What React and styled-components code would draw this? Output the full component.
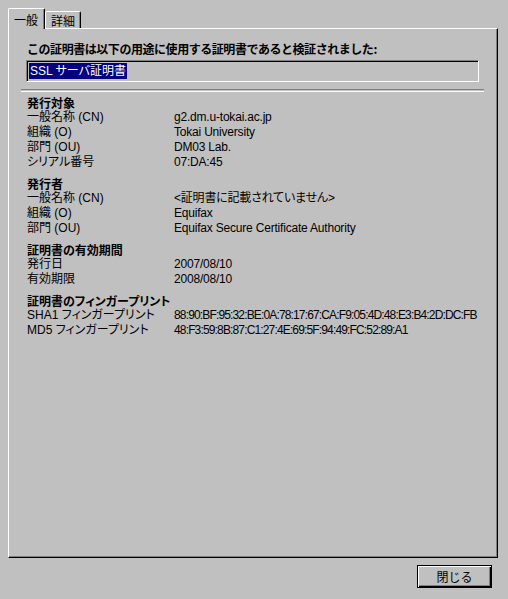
import React from "react";
import styled, { createGlobalStyle } from "styled-components";

const GlobalStyle = createGlobalStyle`
  html, body {
    margin: 0;
    padding: 0;
    background: #c0c0c0;
  }
  body {
    font-family: "Liberation Sans", "Noto Sans CJK JP", sans-serif;
    font-size: 12px;
    font-feature-settings: "palt";
    color: #000;
  }
`;

const sections = [
  {
    title: "発行対象",
    rows: [
      ["一般名称 (CN)", "g2.dm.u-tokai.ac.jp"],
      ["組織 (O)", "Tokai University"],
      ["部門 (OU)", "DM03 Lab."],
      ["シリアル番号", "07:DA:45"],
    ],
  },
  {
    title: "発行者",
    rows: [
      ["一般名称 (CN)", "<証明書に記載されていません>"],
      ["組織 (O)", "Equifax"],
      ["部門 (OU)", "Equifax Secure Certificate Authority"],
    ],
  },
  {
    title: "証明書の有効期間",
    rows: [
      ["発行日", "2007/08/10"],
      ["有効期限", "2008/08/10"],
    ],
  },
  {
    title: "証明書のフィンガープリント",
    rows: [
      ["SHA1 フィンガープリント", "88:90:BF:95:32:BE:0A:78:17:67:CA:F9:05:4D:48:E3:B4:2D:DC:FB"],
      ["MD5 フィンガープリント", "48:F3:59:8B:87:C1:27:4E:69:5F:94:49:FC:52:89:A1"],
    ],
    tight: true,
  },
];

export default function App() {
  return (
    <Window>
      <GlobalStyle />
      <TabStrip>
        <Tab active>一般</Tab>
        <Tab>詳細</Tab>
      </TabStrip>
      <Panel>
        <Heading wide>この証明書は以下の用途に使用する証明書であると検証されました:</Heading>
        <Field>
          <Selected>SSL サーバ証明書</Selected>
        </Field>
        <Separator />
        {sections.map((s) => (
          <Section key={s.title}>
            <Heading>{s.title}</Heading>
            {s.rows.map(([label, value]) => (
              <Row key={label}>
                <Label>{label}</Label>
                <Value tight={s.tight}>{value}</Value>
              </Row>
            ))}
          </Section>
        ))}
      </Panel>
      <Footer>
        <Button>閉じる</Button>
      </Footer>
    </Window>
  );
}

const Window = styled.div`
  width: 508px;
  height: 599px;
  box-sizing: border-box;
  padding: 8px 10px 0 8px;
  display: flex;
  flex-direction: column;
`;

const TabStrip = styled.div`
  display: flex;
  align-items: flex-end;
  height: 20px;
  position: relative;
  z-index: 1;
`;

const Tab = styled.div`
  box-sizing: border-box;
  height: ${(p) => (p.active ? "21px" : "17px")};
  width: ${(p) => (p.active ? "37px" : "36px")};
  margin-bottom: ${(p) => (p.active ? "-1px" : "0")};
  padding-top: ${(p) => (p.active ? "3px" : "1px")};
  padding-left: 5px;
  background: #c0c0c0;
  border-top: 1px solid #fff;
  border-left: 1px solid #fff;
  border-right: 1px solid #000;
  border-top-left-radius: 2px;
  border-top-right-radius: 2px;
  box-shadow: inset -1px 0 0 #808080;
  line-height: 15px;
  font-family: "Noto Sans CJK JP", sans-serif;
  font-feature-settings: normal;
`;

const Panel = styled.div`
  box-sizing: border-box;
  height: 530px;
  padding: 12px 18px 0 17px;
  border-top: 1px solid #fff;
  border-left: 1px solid #fff;
  border-right: 1px solid #000;
  border-bottom: 1px solid #000;
  box-shadow: inset -1px -1px 0 #808080;
  display: flex;
  flex-direction: column;
`;

const Heading = styled.div`
  font-weight: bold;
  line-height: 15px;
  font-family: "Noto Sans CJK JP", sans-serif;
  font-feature-settings: ${(p) => (p.wide ? "normal" : "palt")};
  letter-spacing: ${(p) => (p.wide ? "-0.45px" : "0")};
  padding-left: 1px;
`;

const Field = styled.div`
  margin-top: 4px;
  height: 22px;
  box-sizing: border-box;
  border-top: 1px solid #808080;
  border-left: 1px solid #808080;
  border-right: 1px solid #fff;
  border-bottom: 1px solid #fff;
  box-shadow: inset 1px 1px 0 #000;
  padding: 2px 0 0 2px;
  display: flex;
  align-items: flex-start;
`;

const Selected = styled.span`
  background: #000080;
  color: #fff;
  line-height: 16px;
  padding: 0 1px;
`;

const Separator = styled.div`
  margin: 7px -5px 3px -5px;
  height: 1px;
  border-top: 1px solid #808080;
  border-bottom: 1px solid #fff;
`;

const Section = styled.div`
  margin-bottom: 6px;
`;

const Row = styled.div`
  display: grid;
  grid-template-columns: 147px 1fr;
  line-height: 15px;
  padding-left: 1px;
`;

const Label = styled.span`
  white-space: nowrap;
`;

const Value = styled.span`
  white-space: nowrap;
  letter-spacing: ${(p) => (p.tight ? "-0.85px" : "-0.2px")};
`;

const Footer = styled.div`
  display: flex;
  justify-content: flex-end;
  padding: 7px 6px 0 0;
`;

const Button = styled.button`
  width: 75px;
  height: 23px;
  box-sizing: border-box;
  background: #c0c0c0;
  border: 1px solid #000;
  box-shadow: inset 1px 1px 0 #fff, inset -1px -1px 0 #000, inset -2px -2px 0 #808080;
  font-family: "Noto Sans CJK JP", sans-serif;
  font-size: 12px;
  color: #000;
  padding: 0;
  line-height: 19px;
`;
